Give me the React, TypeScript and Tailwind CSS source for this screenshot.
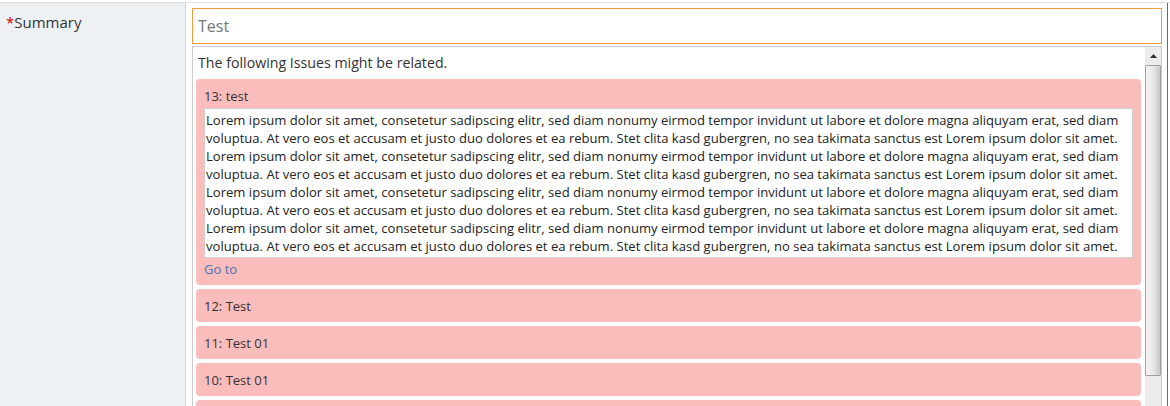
const LINE_A =
  "Lorem ipsum dolor sit amet, consetetur sadipscing elitr, sed diam nonumy eirmod tempor invidunt ut labore et dolore magna aliquyam erat, sed diam";
const LINE_B =
  "voluptua. At vero eos et accusam et justo duo dolores et ea rebum. Stet clita kasd gubergren, no sea takimata sanctus est Lorem ipsum dolor sit amet.";

const lines = [LINE_A, LINE_B, LINE_A, LINE_B, LINE_A, LINE_B, LINE_A, LINE_B];

const others = ["12: Test", "11: Test 01", "10: Test 01"];

function Scrollbar() {
  return (
    <div className="w-[16px] shrink-0 flex flex-col bg-[#ececec]">
      <div className="h-[18px] shrink-0 flex items-center justify-center">
        <svg width="7" height="4" viewBox="0 0 7 4">
          <path d="M0 4 L3.5 0 L7 4 Z" fill="#333" />
        </svg>
      </div>
      <div className="h-[311px] shrink-0 border border-[#a0a0a0] rounded-[1px] bg-[linear-gradient(to_right,#f4f4f4,#e6e6e6_55%,#c9c9c9)]" />
      <div className="flex-1" />
    </div>
  );
}

export default function App() {
  return (
    <div
      className="w-[1170px] h-[406px] overflow-hidden bg-white text-[#333]"
      style={{ fontFamily: '"Open Sans", "Liberation Sans", sans-serif' }}
    >
      <div className="h-[2px]" />
      <div className="flex h-[404px] border-t border-[#dedede]">
        <div className="w-[186px] shrink-0 bg-[#edf1f4] border-r border-[#d6d6d6] pl-[6px] pt-[7px]">
          <span className="text-[15px] leading-[20px]">
            <span className="text-[#c00]">*</span>Summary
          </span>
        </div>
        <div className="w-[981px] shrink-0 pl-[6px] pr-[5px] pt-[5px] flex flex-col">
          <div className="h-[36px] shrink-0 border border-[#f39b3c] flex items-center px-[5px] text-[16px] text-[#777]">
            Test
          </div>
          <div className="mt-[2px] flex-1 min-h-0 overflow-hidden border border-[#cccccc] border-b-0 flex">
            <div className="flex-1 min-w-0 pl-[3px] pr-[4px]">
              <div className="pl-[2px] pt-[6px] pb-[6px] text-[14.2px] leading-[20px]">
                The following Issues might be related.
              </div>
              <div className="flex flex-col gap-[4px]">
                <div className="bg-[#fbbcbc] rounded-[4px] px-[8px] pt-[9px] pb-[5px]">
                  <div className="text-[13px] leading-[16px]">13: test</div>
                  <div className="mt-[4px] bg-white border border-[#cfcfcf] pl-[1px] pt-[2px] h-[150px] text-[13.07px] leading-[18px] text-[#222]">
                    {lines.map((l, i) => (
                      <div key={i} className="whitespace-nowrap">
                        {l}
                      </div>
                    ))}
                  </div>
                  <a className="block text-[13px] leading-[21px] pt-[1px] text-[#4677b8]">Go to</a>
                </div>
                {others.map((t) => (
                  <div key={t} className="bg-[#fbbcbc] rounded-[4px] px-[8px] pt-[9px] pb-[7px] text-[13px] leading-[17px]">
                    {t}
                  </div>
                ))}
                <div className="bg-[#fbbcbc] rounded-[4px] h-[33px]" />
              </div>
            </div>
            <Scrollbar />
          </div>
        </div>
        <div className="w-[1px] shrink-0 bg-[#3f73b3]" />
      </div>
    </div>
  );
}
